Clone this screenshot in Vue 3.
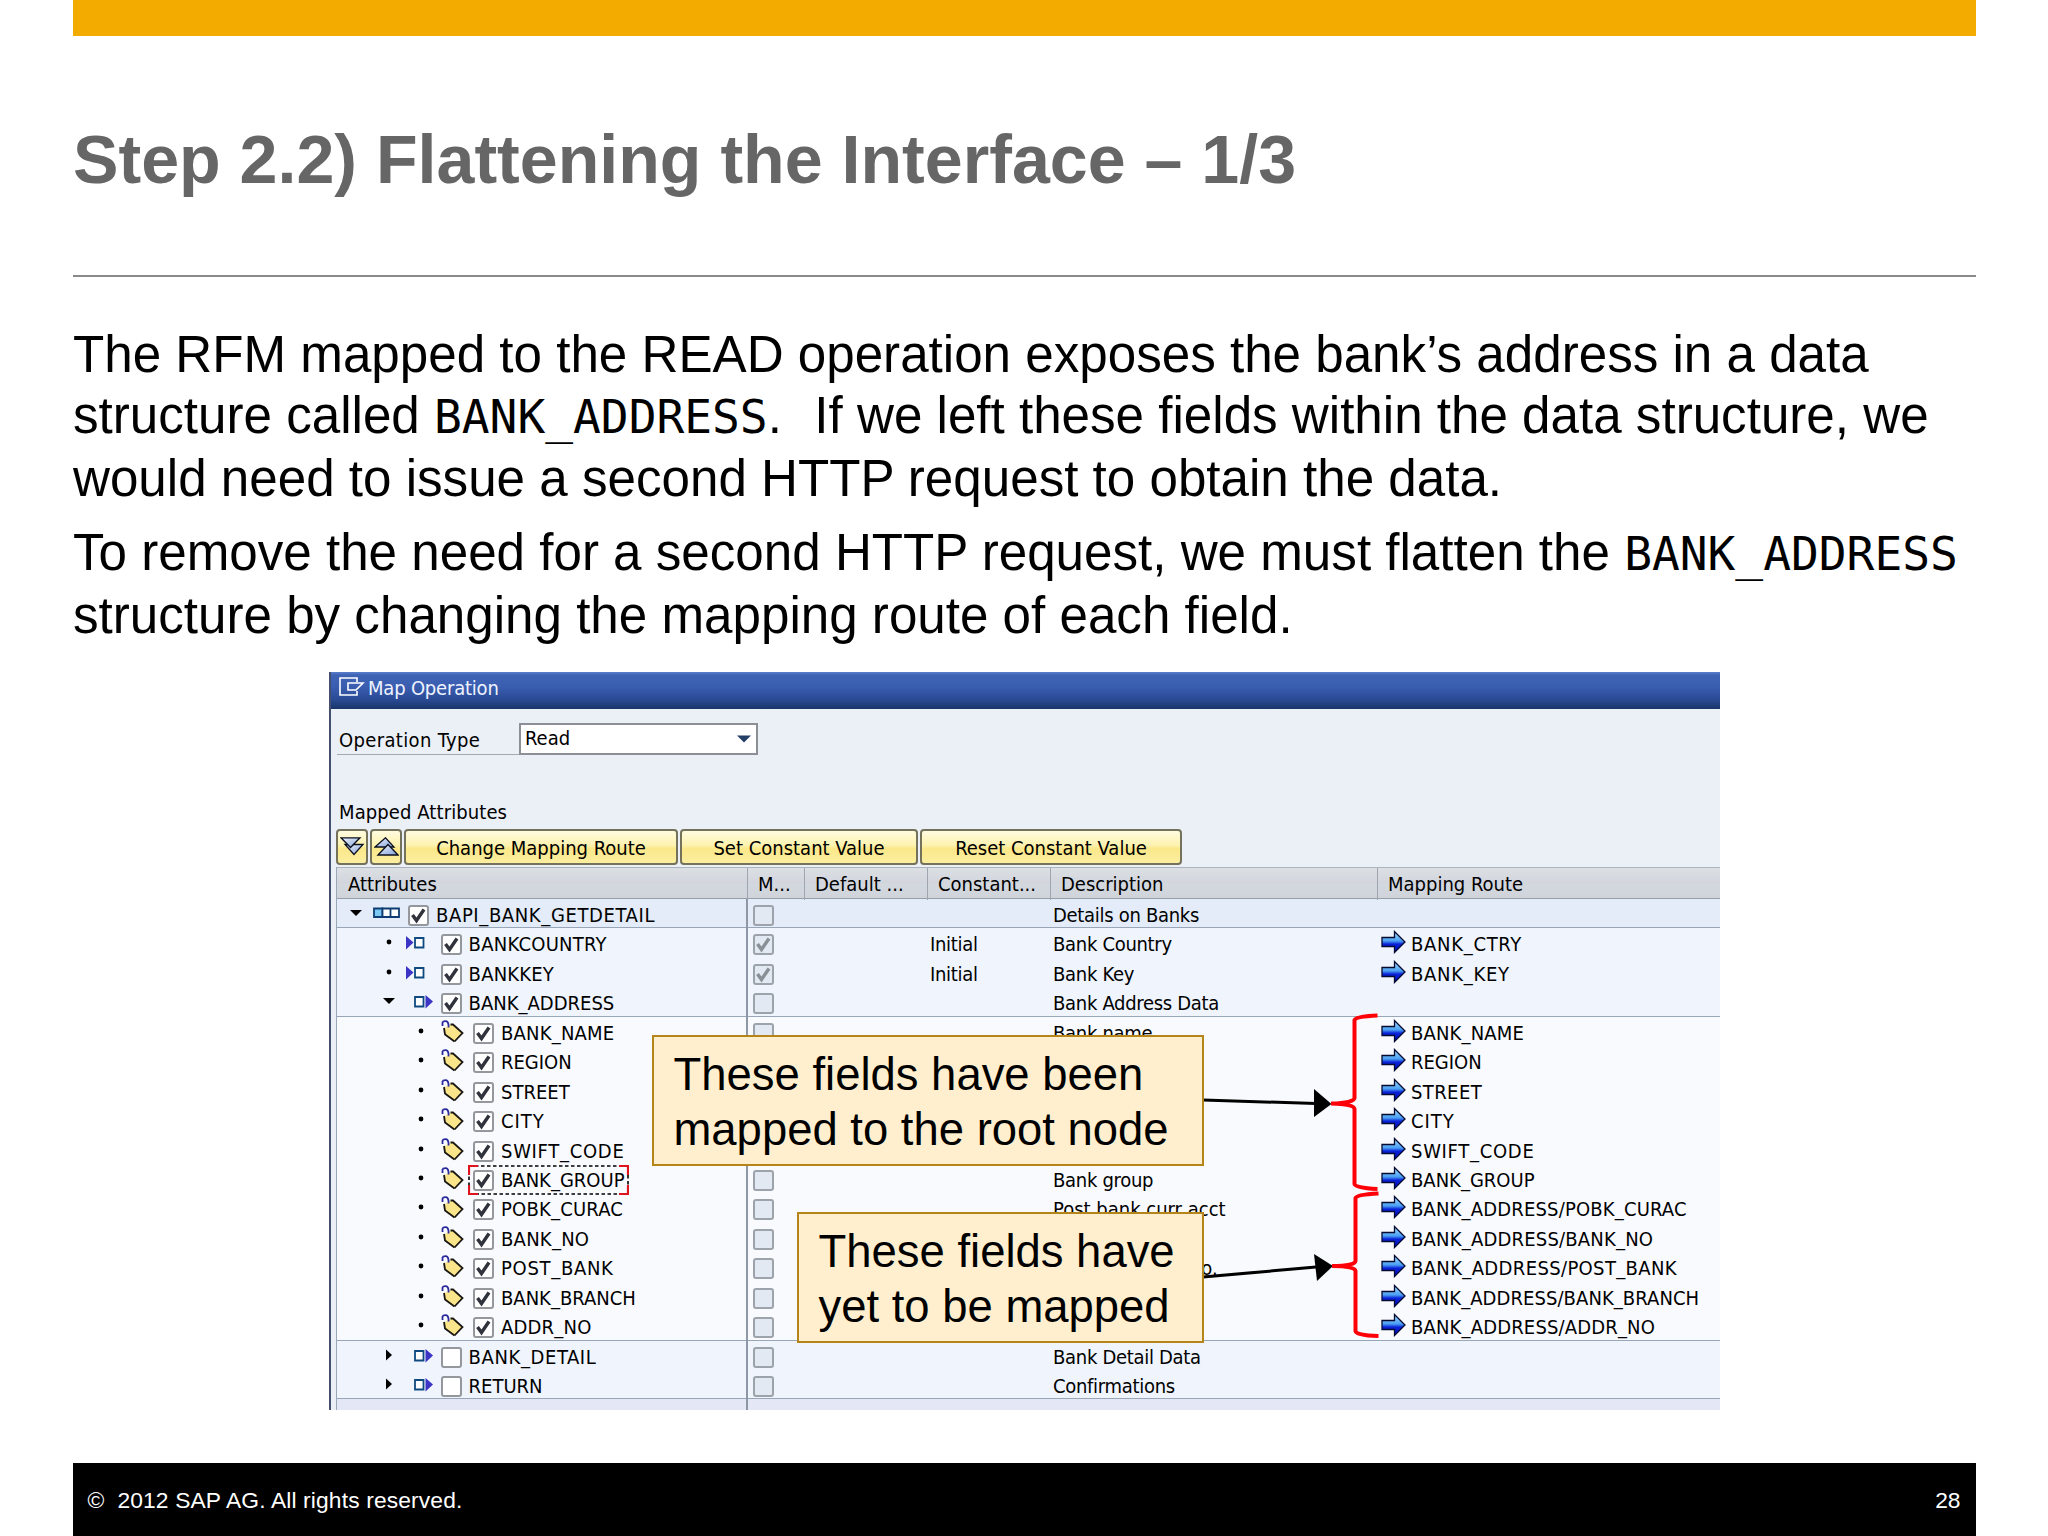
<template>
  <div class="slide">
    <div class="top-bar"></div>
    <h1>Step 2.2) Flattening the Interface – 1/3</h1>
    <div class="rule"></div>

    <div class="copy">
      <p>
        <span class="line first">The RFM mapped to the READ operation exposes the bank’s address in a data</span>
        <span class="line tall">structure called <code>BANK_ADDRESS</code>.<span class="gap">&nbsp;</span> If we left these fields within the data structure, we</span>
        <span class="line">would need to issue a second HTTP request to obtain the data.</span>
      </p>
      <p>
        <span class="line tall">To remove the need for a second HTTP request, we must flatten the <code>BANK_ADDRESS</code></span>
        <span class="line">structure by changing the mapping route of each field.</span>
      </p>
    </div>

    <section class="window">
      <header class="window-title">
        <svg width="26" height="20" viewBox="0 0 26 20" fill="none" stroke="#fff" stroke-width="1.6">
          <path d="M18 5V1H1V18H18V14" />
          <path d="M9 6H24L17 13H9Z" />
        </svg>
        <span>Map Operation</span>
      </header>

      <div class="operation">
        <label>Operation Type</label>
        <div class="select">
          <span>Read</span>
          <svg width="14" height="8" viewBox="0 0 14 8"><path d="M0 0.5H14L7 7.5Z" fill="#243f66" /></svg>
        </div>
      </div>

      <div class="caption">Mapped Attributes</div>

      <div class="toolbar">
        <button class="square">
          <svg width="25" height="22" viewBox="0 0 25 22" fill="url(#chevron)" stroke="#0b1020" stroke-width="1.3">
            <defs>
              <linearGradient id="chevron" x1="0" y1="0" x2="1" y2="1">
                <stop offset="0" stop-color="#f4f8ff" />
                <stop offset="1" stop-color="#7f9fd8" />
              </linearGradient>
            </defs>
            <path d="M5 7.5H23L14 17.5Z" />
            <path d="M1 0.8H20L10.5 10.5Z" />
          </svg>
        </button>
        <button class="square">
          <svg width="25" height="22" viewBox="0 0 25 22" fill="url(#chevron)" stroke="#0b1020" stroke-width="1.3">
            <path d="M1 10L11.5 0.8L20 10Z" />
            <path d="M4 18L14 7.5L24 18Z" />
          </svg>
        </button>
        <button class="change">Change Mapping Route</button>
        <button class="set">Set Constant Value</button>
        <button class="reset">Reset Constant Value</button>
      </div>

      <div class="table">
        <div class="row head">
          <div v-for="title in columns" :key="title" class="cell">{{ title }}</div>
        </div>
        <div
          v-for="row in rows"
          :key="row.name"
          class="row"
          :class="['level-' + row.level, { last: row.last }]"
        >
          <div class="cell tree">
            <svg class="toggle" width="12" height="12" viewBox="0 0 12 12">
              <path v-if="row.toggle === 'open'" d="M0 3H12L6 9Z" />
              <path v-else-if="row.toggle === 'closed'" d="M3 0.5L9 6L3 11.5Z" />
              <circle v-else cx="6" cy="6" r="2.4" />
            </svg>
            <svg class="kind" width="27" height="24" viewBox="0 0 27 24" fill="none">
              <g v-if="row.kind === 'struct'" stroke="#0f3d73" stroke-width="1.8">
                <path d="M1 6.5H9.5V15H1Z" fill="#7cc8f5" />
                <path d="M9.5 6.5H17.5V15H9.5ZM17.5 6.5H26V15H17.5Z" fill="#fff" />
              </g>
              <g v-else-if="row.kind === 'in'">
                <path d="M0 5L7.5 11.5L0 18.5Z" fill="#3b34c4" />
                <path d="M9 7H17.5V16.5H9Z" stroke="#0e4a80" stroke-width="1.8" fill="#fff" />
              </g>
              <g v-else-if="row.kind === 'out'">
                <path d="M9 7H17.5V16.5H9Z" stroke="#0e4a80" stroke-width="1.8" fill="#fff" />
                <path d="M19.5 5L27 11.5L19.5 18.5Z" fill="#3b34c4" />
              </g>
              <g v-else>
                <path d="M6 8.5L14.5 4L24.5 13L16.5 21.5L7.5 15Z" fill="#fbe58a" />
                <path d="M12.5 4.5H15L24.5 13L16.5 21.5" stroke="#1a1712" stroke-width="1.8" />
                <path d="M16.5 21.5L7 14.5L6 8" stroke="#1a1712" stroke-width="1.8" />
                <path d="M4.5 6V2.5Q5 1 8 1.2Q11 2 10.5 7.5" stroke="#2a2a9c" stroke-width="1.8" />
              </g>
            </svg>
            <span class="check">
              <svg v-if="row.checked" width="17" height="17" viewBox="0 0 17 17">
                <path d="M2.5 8L6.5 13.5L14 2.5" />
              </svg>
            </span>
            <span :style="{ letterSpacing: (row.tracking || 0) + 'px' }">{{ row.name }}</span>
            <svg v-if="row.selected" class="selection" width="161" height="30" viewBox="0 0 161 30" fill="none">
              <path d="M1 1H160V29H1Z" stroke="#000" stroke-width="1.6" stroke-dasharray="3.5 2.5" />
              <path d="M10 1H1V10M151 1H160V10M10 29H1V20M151 29H160V20" stroke="#e0141c" stroke-width="2.2" />
            </svg>
          </div>
          <div class="cell">
            <span class="check disabled">
              <svg v-if="row.mandatory" width="17" height="17" viewBox="0 0 17 17">
                <path d="M2.5 8L6.5 13.5L14 2.5" />
              </svg>
            </span>
          </div>
          <div class="cell"></div>
          <div class="cell text">{{ row.constant }}</div>
          <div class="cell text" :class="{ loose: row.loose }">{{ row.description }}</div>
          <div class="cell route">
            <template v-if="row.route">
              <svg width="25" height="24" viewBox="0 0 25 24">
                <defs>
                  <linearGradient id="arrow" x1="0" y1="0" x2="0" y2="1">
                    <stop offset="0.1" stop-color="#8fd0ff" />
                    <stop offset="0.45" stop-color="#4a9ff2" />
                    <stop offset="0.6" stop-color="#0a22d8" />
                    <stop offset="1" stop-color="#0008b8" />
                  </linearGradient>
                </defs>
                <path d="M1 7.5H13.5V1.5L24 12L13.5 22.5V16.5H1Z" fill="url(#arrow)" stroke="#050a30" stroke-width="1.3" />
              </svg>
              <span :style="{ letterSpacing: (row.routeTracking || 0) + 'px' }">{{ row.route }}</span>
            </template>
          </div>
        </div>
        <div class="row filler">
          <div class="cell"></div>
        </div>
      </div>
    </section>

    <footer>
      <span class="copyright">©&nbsp; 2012 SAP AG. All rights reserved.</span>
      <span>28</span>
    </footer>

    <!-- Annotations drawn over the window -->
    <svg class="annotations" width="2048" height="1536" viewBox="0 0 2048 1536" fill="none">
      <g stroke="#000" stroke-width="3">
        <path d="M1203 1100L1316 1103.5" />
        <path d="M1203 1277L1316 1267" />
      </g>
      <path d="M1314 1089L1331.5 1104L1314 1117Z" fill="#000" />
      <path d="M1314 1254L1333 1266L1317 1281Z" fill="#000" />
      <g stroke="#ff0008" stroke-width="4">
        <path d="M1377.5 1015.5Q1355 1016.5 1354.5 1020V1098Q1354 1103 1331 1103.5Q1354 1104 1354.5 1109V1184Q1355 1188 1377.5 1189" />
        <path d="M1378.5 1193.5Q1356 1194.5 1355.5 1198V1261Q1355 1266 1332 1266Q1355 1266 1355.5 1271V1331Q1356 1335.5 1378.5 1336" />
      </g>
    </svg>
    <div class="callout mapped">These fields have been<br />mapped to the root node</div>
    <div class="callout unmapped">These fields have<br />yet to be mapped</div>
  </div>
</template>

<script setup>
const columns = ['Attributes', 'M...', 'Default ...', 'Constant...', 'Description', 'Mapping Route']

const field = (name, route, description = '', extra = {}) => ({
  level: 2,
  kind: 'tag',
  checked: true,
  name,
  route,
  description,
  ...extra,
})

const rows = [
  { level: 0, toggle: 'open', kind: 'struct', checked: true, name: 'BAPI_BANK_GETDETAIL', description: 'Details on Banks', last: true, tracking: 0.62 },
  { level: 1, kind: 'in', checked: true, name: 'BANKCOUNTRY', mandatory: true, constant: 'Initial', description: 'Bank Country', route: 'BANK_CTRY', tracking: 0.25, routeTracking: 0.7 },
  { level: 1, kind: 'in', checked: true, name: 'BANKKEY', mandatory: true, constant: 'Initial', description: 'Bank Key', route: 'BANK_KEY', tracking: 0.2, routeTracking: 0.7 },
  { level: 1, toggle: 'open', kind: 'out', checked: true, name: 'BANK_ADDRESS', description: 'Bank Address Data', last: true },
  field('BANK_NAME', 'BANK_NAME', 'Bank name', { tracking: 0.2, routeTracking: 0.15 }),
  field('REGION', 'REGION'),
  field('STREET', 'STREET', '', { routeTracking: 0.4 }),
  field('CITY', 'CITY', '', { tracking: 1, routeTracking: 1 }),
  field('SWIFT_CODE', 'SWIFT_CODE', '', { tracking: 0.7, routeTracking: 0.7 }),
  field('BANK_GROUP', 'BANK_GROUP', 'Bank group', { selected: true }),
  field('POBK_CURAC', 'BANK_ADDRESS/POBK_CURAC', 'Post bank curr acct', { tracking: 0.2, routeTracking: 0.17, loose: true }),
  field('BANK_NO', 'BANK_ADDRESS/BANK_NO', '', { tracking: 0.25, routeTracking: 0.2 }),
  field('POST_BANK', 'BANK_ADDRESS/POST_BANK', 'Post bank acct no.', { tracking: 0.7, routeTracking: 0.36, loose: true }),
  field('BANK_BRANCH', 'BANK_ADDRESS/BANK_BRANCH', '', { routeTracking: 0.07 }),
  field('ADDR_NO', 'BANK_ADDRESS/ADDR_NO', '', { last: true, tracking: 0.2, routeTracking: 0.16 }),
  { level: 1, toggle: 'closed', kind: 'out', name: 'BANK_DETAIL', description: 'Bank Detail Data', tracking: 0.6 },
  { level: 1, toggle: 'closed', kind: 'out', name: 'RETURN', description: 'Confirmations', last: true },
]
</script>

<style>
body {
  background: #fff;
}
</style>

<style scoped>
.slide {
  position: relative;
  display: flex;
  flex-direction: column;
  width: 2048px;
  height: 1536px;
  padding: 0 72.5px;
  box-sizing: border-box;
  overflow: hidden;
  background: #fff;
  color: #000;
  font-family: 'Liberation Sans', Arial, sans-serif;
}
.top-bar {
  height: 36px;
  background: #f3ab00;
}
h1 {
  margin: 83px 0 0 0.5px;
  height: 156px;
  font-size: 68.15px;
  line-height: 80px;
  font-weight: 700;
  color: #666;
  white-space: nowrap;
}
.rule {
  height: 2px;
  background: #8a8a8a;
}
.copy {
  height: 395px;
  padding: 47px 0 0 0.5px;
  box-sizing: border-box;
  font-size: 51.15px;
  white-space: nowrap;
}
.copy p {
  margin: 0 0 12px;
}
.line {
  display: block;
  height: 62px;
  line-height: 62px;
}
.line.first {
  height: 61px;
}
.line.tall {
  height: 63px;
}
.gap {
  letter-spacing: 4px;
}
.copy code {
  font-family: 'DejaVu Sans Mono', monospace;
  font-size: 46.2px;
  line-height: 0;
}
.window {
  width: 1391px;
  height: 738px;
  margin-left: 256.5px;
  padding-left: 7px;
  box-sizing: border-box;
  border-left: 2px solid #44506e;
  background: #ebeff6;
  font-family: 'DejaVu Sans Condensed', 'DejaVu Sans', sans-serif;
  font-stretch: condensed;
  font-size: 20px;
  white-space: nowrap;
  overflow: hidden;
}
.window-title {
  display: flex;
  gap: 3px;
  height: 37px;
  margin-left: -7px;
  padding: 5px 0 0 8px;
  box-sizing: border-box;
  background: linear-gradient(#5a80cc 0, #3f63b4 3px, #3a5db0 40%, #2a4a94 75%, #173568 100%);
  color: #eef3ff;
  line-height: 22px;
  letter-spacing: -0.2px;
}
.operation {
  display: flex;
  height: 32px;
  margin: 14px 0 0 -1px;
}
.operation label {
  width: 182px;
  padding: 3px 0 0 2px;
  box-sizing: border-box;
  border-bottom: 1px solid #a4a9b0;
  line-height: 29px;
  letter-spacing: 0.35px;
}
.select {
  display: flex;
  justify-content: space-between;
  width: 239px;
  padding: 0 5px 0 4px;
  box-sizing: border-box;
  border: 2px solid #8c9096;
  background: #fff;
  line-height: 27px;
}
.select svg {
  margin-top: 10px;
}
.caption {
  height: 30px;
  margin: 42px 0 0 1px;
  line-height: 30px;
  letter-spacing: 0.1px;
}
.toolbar {
  display: flex;
  gap: 2px;
  height: 36px;
  margin: 2px 0 2px -2px;
}
.toolbar button {
  display: flex;
  align-items: center;
  justify-content: center;
  padding: 2px 0 0;
  border: 2px solid #75725c;
  border-radius: 4px;
  background: linear-gradient(#fffbe0, #fdf2ae 45%, #fbe88a 55%, #fbeea0);
  box-sizing: border-box;
  color: #000;
  font: inherit;
}
.toolbar .square {
  width: 32px;
}
.toolbar .change {
  width: 274px;
}
.toolbar .set {
  width: 238px;
}
.toolbar .reset {
  width: 262px;
}
.table {
  margin-left: -2px;
  border-left: 1px solid #9aa8b8;
}
.row {
  display: grid;
  grid-template-columns: 411px 57px 123px 123px 327px 1fr;
  height: 29.45px;
  box-sizing: border-box;
}
.row.last {
  border-bottom: 1px solid #98a6b8;
}
.cell {
  display: flex;
  line-height: 32px;
  min-width: 0;
}
.cell:first-child {
  border-right: 2px solid #8d97a6;
}
.head {
  height: 32px;
  border-top: 1px solid #aeb4bd;
  border-bottom: 1px solid #969eab;
  background: linear-gradient(#dcdfe4, #d2d6dc 50%, #d3d8df 55%, #d0d4da);
}
.head .cell {
  padding-left: 10px;
  border-right: 1px solid #9fa6b0;
}
.head .cell:first-child {
  padding-left: 11px;
}
.head .cell:last-child {
  border-right: none;
}
.level-0 {
  background: #e3ecf8;
}
.level-1 {
  background: #eff4fd;
}
.level-2 {
  background: #f8fafe;
}
.filler {
  height: 20px;
  background: #e4e8f6;
}
.tree {
  position: relative;
  padding-left: 13px;
}
.level-1 .tree {
  padding-left: 45.6px;
}
.level-2 .tree {
  padding-left: 78px;
}
.toggle {
  margin: 8px 11px 0 0;
}
.kind {
  margin: 3px 8px 0 0;
}
.check {
  display: flex;
  width: 21px;
  height: 21px;
  margin: 6px 7px 0 0;
  box-sizing: border-box;
  border: 2px solid #94979c;
  border-radius: 3px;
  background: #fff;
}
.check path {
  fill: none;
  stroke: #30333c;
  stroke-width: 3.4;
}
.check.disabled {
  margin-left: 5px;
  border-color: #9da3aa;
  background: #e2e9f2;
}
.check.disabled path {
  stroke: #8b8f96;
}
.selection {
  position: absolute;
  left: 131px;
  top: 1px;
}
.text {
  padding-left: 2px;
  letter-spacing: -0.3px;
}
.text.loose {
  letter-spacing: 0;
}
.route {
  gap: 5px;
  padding-left: 3px;
}
.route svg {
  margin-top: 2px;
}
.annotations {
  position: absolute;
  left: 0;
  top: 0;
}
.callout {
  position: absolute;
  height: 131px;
  padding: 11px 0 0 19.5px;
  box-sizing: border-box;
  border: 2px solid #b5851a;
  background: #ffefce;
  font-size: 45.45px;
  line-height: 54.5px;
  white-space: nowrap;
}
.mapped {
  left: 652px;
  top: 1035px;
  width: 552px;
}
.unmapped {
  left: 797px;
  top: 1212px;
  width: 407px;
}
footer {
  display: flex;
  justify-content: space-between;
  height: 73px;
  margin-top: 53px;
  padding: 0 15px;
  background: #000;
  color: #fff;
  font-size: 22.8px;
  line-height: 75px;
}
.copyright {
  letter-spacing: 0.14px;
}
</style>
